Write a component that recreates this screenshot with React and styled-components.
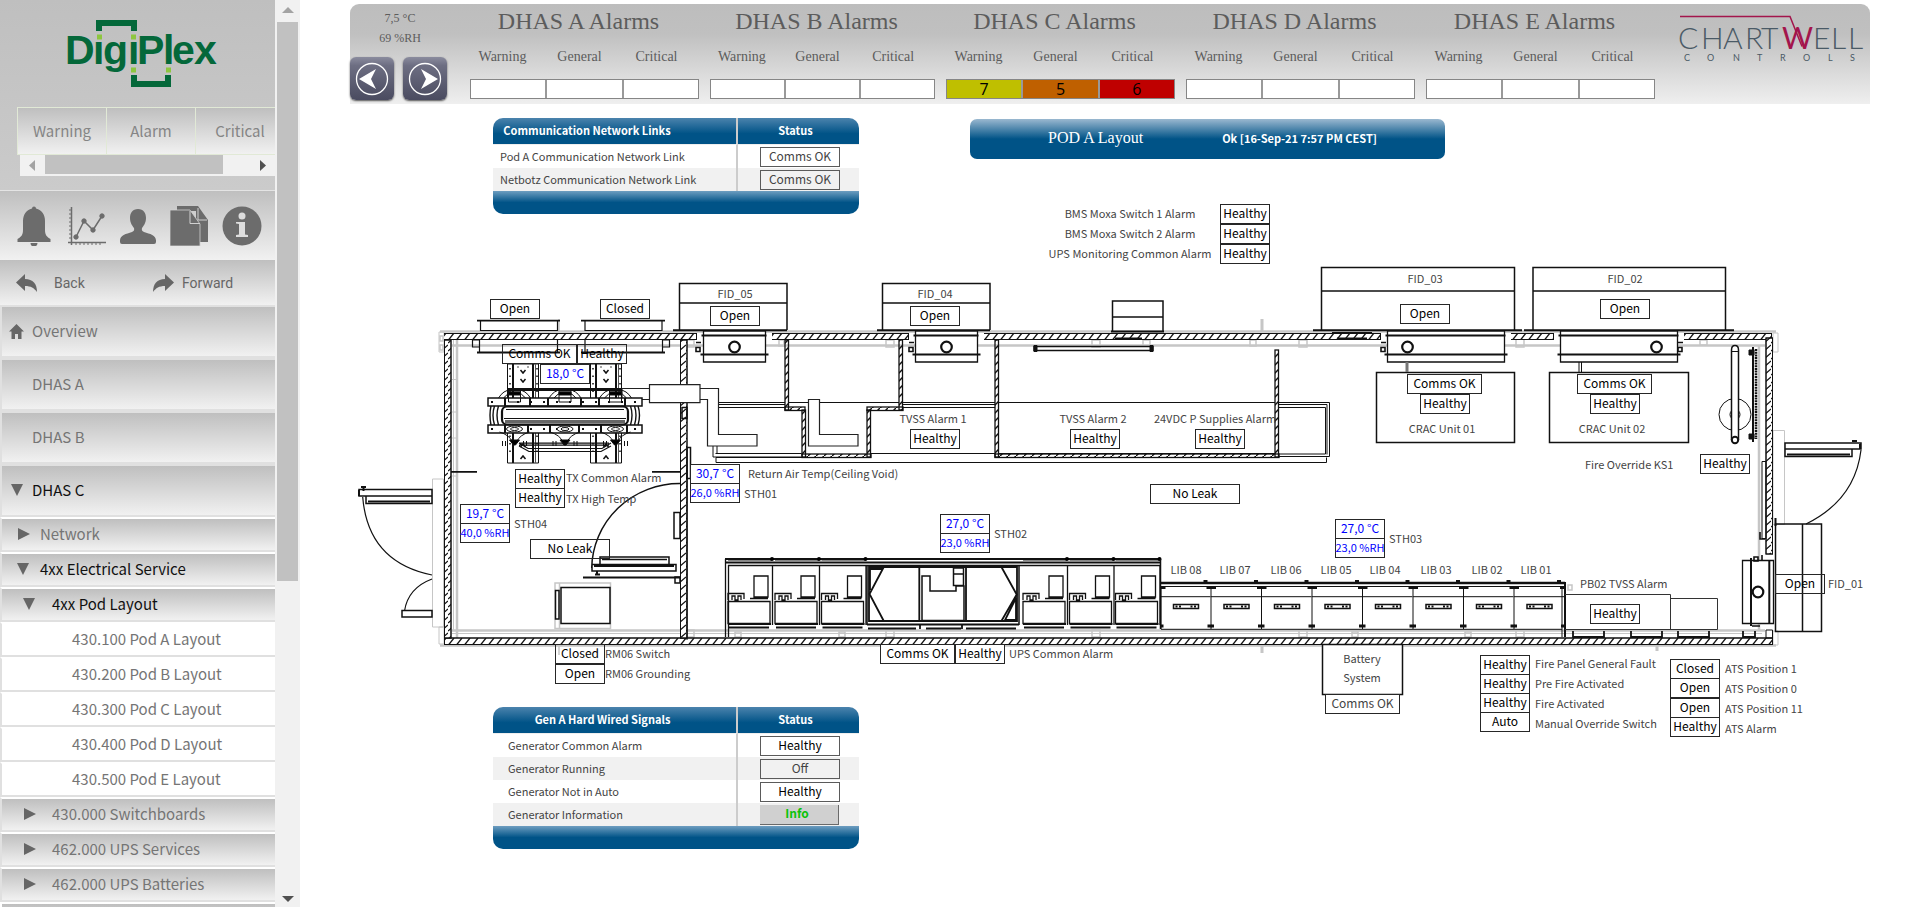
import React from 'react';
import styled, { createGlobalStyle, css } from 'styled-components';

const LABEL = '"Noto Sans CJK SC", "Noto Sans", sans-serif';
const SERIF = '"Liberation Serif", "Times New Roman", serif';
const SHADE = 'linear-gradient(#bfbfbf, #f1f1f1)';

const GlobalStyle = createGlobalStyle`
  * { box-sizing: border-box; }
  body { margin: 0; background: #fff; font-family: ${LABEL}; font-size: 11px; color: #444; }
  button { font: inherit; color: inherit; margin: 0; padding: 0; border: 0; background: none; cursor: pointer; }
  a { color: inherit; text-decoration: none; }
  svg { display: block; flex: none; }
`;

const Page = styled.div`
  display: flex;
  height: 100vh;
  overflow: hidden;
`;

/* ---------- sidebar ---------- */

const Sidebar = styled.aside`
  display: flex;
  flex: none;
  width: 300px;
  height: 100%;
  background: #f1f1f1;
`;
const SideBody = styled.div`
  width: 275px;
  overflow: hidden;
  color: #757575;
  font-size: 15px;
`;
const Brand = styled.div`
  height: 191px;
  padding: 20px 0 0 17px;
  border-bottom: 1px solid #e4e4e4;
  background: linear-gradient(#bfbfbf, #cbcbcb);
  overflow: hidden;
`;
const BrandLogo = styled.svg`
  margin: 0 0 19px 49px;
`;
const Tabs = styled.div`
  display: flex;
  width: 268px;
  height: 48px;
  border: 1px solid #e1e9d6;
`;
const Tab = styled.button`
  flex: 1;
  padding-bottom: 2px;
  background: ${SHADE};
  color: #858585;
  & + & { border-left: 1px solid #e1e9d6; }
`;
const HScroll = styled.div`
  display: flex;
  align-items: center;
  justify-content: space-between;
  height: 21px;
  margin-left: 3px;
  padding: 0 9px;
  background: #f1f1f1;
`;
const HThumb = styled.div`
  width: 178px;
  height: 19px;
  margin: 0 auto 2px 10px;
  background: #c1c1c1;
`;
const VScroll = styled.div`
  display: flex;
  flex-direction: column;
  align-items: center;
  width: 25px;
  padding: 7px 0 5px;
`;
const VThumb = styled.div`
  width: 21px;
  height: 559px;
  margin: 9px 0 auto;
  background: #c1c1c1;
`;
const Tools = styled.div`
  display: flex;
  justify-content: space-between;
  align-items: center;
  height: 69px;
  padding: 0 13px 0 17px;
  background: ${SHADE};
`;
const History = styled.div`
  display: flex;
  height: 45px;
  background: ${SHADE};
  font-family: Roboto, sans-serif;
  font-size: 14px;
`;
const HistoryButton = styled.button`
  display: flex;
  align-items: center;
  gap: ${p => p.$gap}px;
  width: 137px;
  padding-left: 16px;
  color: #666;
`;
const NavItem = styled.a`
  display: flex;
  align-items: center;
  position: relative;
  height: ${p => (p.$top ? 53 : 35)}px;
  padding: 0 0 2px ${p => p.$indent - 2}px;
  border: solid #e0e0e0;
  border-width: 2px 0 2px 2px;
  border-top-color: ${p => (p.$top ? '#e0e0e0' : '#fff')};
  background: ${p => (p.$leaf ? '#fff' : SHADE)} padding-box;
  color: ${p => (p.$open ? '#111' : '#757575')};
  white-space: nowrap;
`;
const NavGlyph = styled.svg`
  position: absolute;
  left: ${p => p.$x}px;
`;
const NavEdge = styled.div`
  height: 35px;
  border: solid #fff;
  border-width: 2px 0 0 2px;
  background: ${SHADE};
`;

const NAV = [
  { t: 'Overview', i: 32, top: 1, icon: 'home', x: 7 },
  { t: 'DHAS A', i: 32, top: 1 },
  { t: 'DHAS B', i: 32, top: 1 },
  { t: 'DHAS C', i: 32, top: 1, icon: 'down', x: 9, open: 1 },
  { t: 'Network', i: 40, icon: 'right', x: 16 },
  { t: '4xx Electrical Service', i: 40, icon: 'down', x: 15, open: 1 },
  { t: '4xx Pod Layout', i: 52, icon: 'down', x: 21, open: 1 },
  { t: '430.100 Pod A Layout', i: 72, leaf: 1 },
  { t: '430.200 Pod B Layout', i: 72, leaf: 1 },
  { t: '430.300 Pod C Layout', i: 72, leaf: 1 },
  { t: '430.400 Pod D Layout', i: 72, leaf: 1 },
  { t: '430.500 Pod E Layout', i: 72, leaf: 1 },
  { t: '430.000 Switchboards', i: 52, icon: 'right', x: 22 },
  { t: '462.000 UPS Services', i: 52, icon: 'right', x: 22 },
  { t: '462.000 UPS Batteries', i: 52, icon: 'right', x: 22 },
];
const GLYPH = {
  home: 'M7.500 1L15 8.500h-2.500V16H9V11H6v5H2.500V8.500H0z',
  down: 'M0 2h12L6 14z',
  right: 'M0 2l12 6-12 6z',
};

function DigiPlexLogo() {
  return (
    <BrandLogo width="156" height="68" viewBox="66 20 156 68" role="img" aria-label="DigiPlex">
      <text x="65 93 103 128 137 163 172 194" y="64" fontFamily="Liberation Sans, Arial, sans-serif" fontWeight="700" fontSize="41" fill="#04683a">DigiPlex</text>
      <path d="M94 32.500h9v8h-9zM129 32.500h9v8h-9z" fill="#c2c2c2" />
      <path d="M99 31V23h35v8M134 75v9h34v-9" fill="none" stroke="#04683a" strokeWidth="6" />
      <path d="M97 34.500h5v5h-5zM131 34.500h5v5h-5zM131 67.500h5v5h-5zM166 67.500h5v5h-5z" fill="#8dc63f" />
    </BrandLogo>
  );
}

function SideIcons() {
  const c = '#6c6c6c';
  return (
    <Tools>
      <button aria-label="Alarms">
        <svg width="37" height="40" fill={c}><path d="M15 2.500a2 2 0 0 1 4 0C25 4 28 9 28 15v9c0 5 2 7 5.500 9v3H.500v-3C4 31 6 29 6 24v-9C6 9 9 4 15 2.500zM13.500 37h7a3.500 3.500 0 0 1-7 0z" /></svg>
      </button>
      <button aria-label="Trends">
        <svg width="38" height="40" fill={c} stroke={c}>
          <path d="M3.500 1v38M0 36.500h38M8 31l8-16 9 9 9-14" fill="none" strokeWidth="1.500" />
          <path d="M1 4h2M1 8h2M1 12h2M1 16h2M1 20h2M1 24h2M1 28h2M1 32h2M8 37v2M12 37v2M16 37v2M20 37v2M24 37v2M28 37v2M32 37v2" />
          <circle cx="8" cy="31" r="2.200" /><circle cx="16" cy="15" r="2.200" /><circle cx="25" cy="24" r="2.200" /><circle cx="34" cy="10" r="2.200" />
        </svg>
      </button>
      <button aria-label="Users">
        <svg width="36" height="40" fill={c}><path d="M18 3c5.500 0 8 4 8 9s-2.500 8-4 10c-.5 2 0 3 2 4 6 2 12 3 12 8.500V36q0 2-2 2H2q-2 0-2-2v-1.500C0 29 6 28 12 26c2-1 2.500-2 2-4-1.500-2-4-5-4-10s2.500-9 8-9z" /></svg>
      </button>
      <button aria-label="Reports">
        <svg width="38" height="40" fill={c}>
          <path d="M7 0h21l10 14v22H26V5H7z" /><path d="M0 4h20l10 14v22H0z" stroke="#d0d0d0" strokeWidth=".8" />
          <path d="M20 5v12.500h10M28 2v12h9" fill="none" stroke="#d0d0d0" />
        </svg>
      </button>
      <button aria-label="Information">
        <svg width="40" height="40">
          <circle cx="20" cy="20" r="19.500" fill={c} />
          <circle cx="20" cy="10" r="3.500" fill="#ddd" /><path d="M14 16h9v12.500l3 .5v2H14v-2l3-.5V18l-3-.5z" fill="#ddd" />
        </svg>
      </button>
    </Tools>
  );
}

/* ---------- header ---------- */

const Main = styled.main`
  display: flex;
  flex-direction: column;
  flex: 1;
  min-width: 0;
  padding-top: 4px;
  overflow: hidden;
`;
const Header = styled.header`
  display: flex;
  flex: none;
  height: 100px;
  margin: 0 47px 14px 50px;
  border-radius: 9px 9px 0 0;
  background: linear-gradient(#bdbdbd 0, #c0c0c0 30%, #efefef);
  font-family: ${SERIF};
  font-size: 14px;
  color: #5c5c5c;
`;
const Climate = styled.div`
  display: flex;
  flex-direction: column;
  width: 120px;
  padding-top: 4px;
  line-height: 20px;
`;
const Reading = styled.div`
  width: 100px;
  text-align: center;
  font-size: 12px;
`;
const Pager = styled.div`
  display: flex;
  gap: 9px;
  padding-top: 9px;
`;
const PageButton = styled.button`
  display: grid;
  place-items: center;
  width: 44px;
  height: 43px;
  border-radius: 6px;
  background: linear-gradient(#8b8c9e, #6d6e82 20%, #4a4b60);
  box-shadow: 0 1px 2px #555;
`;
const Groups = styled.div`
  display: flex;
  flex: 1;
  gap: 11px;
`;
const Group = styled.section`
  flex: ${p => p.$grow} 1 0;
  text-align: center;
`;
const GroupTitle = styled.h2`
  margin: 0;
  padding: 3px 12px 0 0;
  font-size: 24px;
  font-weight: 400;
  line-height: 28px;
  white-space: nowrap;
`;
const Levels = styled.div`
  display: flex;
  margin: 0 4px 0 -6px;
  padding-top: 12px;
  line-height: 20px;
  span { flex: 1; }
`;
const Counts = styled.div`
  display: flex;
  height: 20px;
  margin-top: 12px;
  border: 1px solid #868686;
  font-family: "Open Sans", sans-serif;
  font-size: 16px;
  line-height: 18px;
  color: #000;
`;
const Count = styled.output`
  flex: 1;
  background: ${p => p.$fill};
  & + & { border-left: 2px solid #999; }
`;
const MakerBox = styled.div`
  display: flex;
  justify-content: flex-end;
  width: 215px;
  padding: 9px 6px 0 0;
`;

const ALARMS = [
  { n: 'A', grow: 229 },
  { n: 'B', grow: 225 },
  { n: 'C', grow: 229, v: ['7', '5', '6'] },
  { n: 'D', grow: 229 },
  { n: 'E', grow: 229 },
];
const LEVEL_COLORS = ['#bfbf00', '#bf6000', '#bf0000'];

function ChartwellLogo() {
  return (
    <svg width="186" height="52" viewBox="1678 12 186 52" role="img" aria-label="Chartwell Controls">
      <g fontFamily="Lato, sans-serif" fill="#4a5a66">
        <text x="1678 1701 1723 1745 1761 1782 1813 1831 1848" y="48" fontSize="30" fontWeight="300">
          CHART<tspan fill="#a3154c" fontWeight="400">W</tspan>ELL
        </text>
        <text x="1684 1707 1733 1757 1780 1803 1828 1850" y="60" fontSize="9">CONTROLS</text>
      </g>
      <path d="M1680 15.500h110l12 30" fill="none" stroke="#a3154c" strokeWidth="1.500" />
    </svg>
  );
}

/* ---------- tables and banner ---------- */

const TopRow = styled.div`
  display: flex;
  flex: none;
  height: 146px;
  padding-left: 193px;
`;
const Panel = styled.div`
  flex: none;
  align-self: flex-start;
  width: 366px;
  border-radius: 10px;
  overflow: hidden;
`;
const StatusTable = styled.table`
  width: 100%;
  table-layout: fixed;
  border-spacing: 0;
  line-height: 18px;
  th, td { padding: 0 0 2px; }
  th { height: 26px; background: linear-gradient(#4b83ad, #005387 60%); color: #fff; font-weight: 700; }
  th:first-child { width: 245px; border-right: 2px solid #ccc; padding-right: ${p => p.$head}px; }
  th:last-child { padding-right: 6px; }
  td { height: 23px; }
  tbody td:first-child { border-right: 2px solid #ccc; padding-left: ${p => p.$pad}px; }
  tbody tr:first-child td { height: 24px; border-top: 1px solid #eee; }
  tbody tr:nth-child(even) { background: #f1f1f1; }
  tbody td:last-child { padding: 0 0 0 22px; }
  tfoot td { background: linear-gradient(#6d9dc0, #005387 50%); }
`;
const Status = styled.div`
  width: 80px;
  height: 20px;
  border: 1px solid #5a5a5a;
  font-size: 12px;
  line-height: 16px;
  text-align: center;
  color: ${p => (p.$dark ? '#000' : '#444')};
`;
const InfoButton = styled.button`
  display: block;
  width: 79px;
  height: 20px;
  padding: 0 4px 2px 0;
  border: solid #6a6a6a;
  border-width: 0 1px 1px 0;
  background: #d0d0d0;
  color: #0ac20a;
  font-size: 12px;
  font-weight: 700;
  line-height: 16px;
`;
const BannerColumn = styled.div`
  display: flex;
  flex-direction: column;
  justify-content: space-between;
  width: 475px;
  margin: 1px 0 0 111px;
`;
const Banner = styled.div`
  display: flex;
  align-items: center;
  gap: 79px;
  height: 40px;
  padding: 0 0 2px 78px;
  border-radius: 7px;
  background: linear-gradient(#9ab8d0, #005387 50%);
  color: #fff;
  font-weight: 700;
  h1 { margin: 0; font: 400 16px/20px ${SERIF}; }
`;
const Moxa = styled.div`
  display: flex;
  width: 300px;
  height: 20px;
  padding-left: 70px;
  line-height: 18px;
  text-align: center;
  span { width: 180px; }
`;
const GenRow = styled.div`
  flex: none;
  padding-left: 193px;
`;

function DataTable({ title, pad, head, rows }) {
  return (
    <Panel>
      <StatusTable $pad={pad} $head={head}>
        <thead><tr><th>{title}</th><th>Status</th></tr></thead>
        <tbody>
          {rows.map(([name, value]) => (
            <tr key={name}>
              <td>{name}</td>
              <td>{value === 'Info' ? <InfoButton>Info</InfoButton> : <Status $dark={value === 'Healthy'}>{value}</Status>}</td>
            </tr>
          ))}
        </tbody>
        <tfoot><tr><td colSpan="2" /></tr></tfoot>
      </StatusTable>
    </Panel>
  );
}

/* ---------- floor plan ---------- */

/* Plan coordinates start at (300, 264), the corner of the plan area. */
const Plan = styled.section`
  position: relative;
  flex: none;
  height: 443px;
`;
const Drawing = styled.svg`
  position: absolute;
  inset: 0 auto auto 0;
`;
const place = css`
  position: absolute;
  left: ${p => p.$x - 300}px;
  top: ${p => p.$y - 264}px;
`;
const Tag = styled.output`
  ${place}
  display: flex;
  justify-content: center;
  width: ${p => p.$w || 50}px;
  height: 20px;
  border: 1px solid #262626;
  background: ${p => (p.$clear ? 'transparent' : '#fff')};
  color: ${p => (p.$blue ? '#00f' : p.$soft ? '#444' : '#000')};
  font-size: ${p => (p.$small ? 11 : 12)}px;
  line-height: 16px;
  white-space: nowrap;
`;
const Note = styled.div`
  ${place}
  width: ${p => (p.$mid ? '140px' : 'auto')};
  margin: -11px 0 0 ${p => (p.$mid ? '-70px' : '0')};
  line-height: 20px;
  text-align: center;
  white-space: nowrap;
`;
const MoxaTag = styled.output`
  width: 50px;
  height: 20px;
  border: 1px solid #262626;
  font-size: 12px;
  line-height: 16px;
  color: #000;
`;

const TAGS = [
  ['Open', 490, 299], ['Closed', 600, 299],
  ['Comms OK', 502, 344, { w: 75, clear: 1 }], ['Healthy', 577, 344, { clear: 1 }],
  ['18,0 °C', 540, 364, { blue: 1 }],
  ['Healthy', 515, 469], ['Healthy', 515, 488],
  ['19,7 °C', 460, 504, { blue: 1 }], ['40,0 %RH', 460, 523, { blue: 1, small: 1 }],
  ['No Leak', 530, 539, { w: 80, clear: 1 }],
  ['Closed', 555, 644, { clear: 1 }], ['Open', 555, 664, { clear: 1 }],
  ['Open', 710, 306], ['Open', 910, 306],
  ['Healthy', 910, 429], ['Healthy', 1070, 429], ['Healthy', 1195, 429],
  ['30,7 °C', 690, 464, { blue: 1 }], ['26,0 %RH', 690, 483, { blue: 1, small: 1 }],
  ['27,0 °C', 940, 514, { blue: 1 }], ['23,0 %RH', 940, 533, { blue: 1, small: 1 }],
  ['27,0 °C', 1335, 519, { blue: 1 }], ['23,0 %RH', 1335, 538, { blue: 1, small: 1 }],
  ['No Leak', 1150, 484, { w: 90 }],
  ['Open', 1400, 304], ['Open', 1600, 299],
  ['Comms OK', 1407, 374, { w: 75 }], ['Healthy', 1420, 394],
  ['Comms OK', 1577, 374, { w: 75 }], ['Healthy', 1590, 394],
  ['Healthy', 1700, 454], ['Open', 1775, 574, { clear: 1 }], ['Healthy', 1590, 604],
  ['Comms OK', 880, 644, { w: 75 }], ['Healthy', 955, 644],
  ['Comms OK', 1325, 694, { w: 75, soft: 1 }],
  ['Healthy', 1480, 655], ['Healthy', 1480, 674], ['Healthy', 1480, 693], ['Auto', 1480, 712],
  ['Closed', 1670, 659], ['Open', 1670, 678], ['Open', 1670, 698], ['Healthy', 1670, 717],
];
const NOTES = [
  ['TX Common Alarm', 566, 478], ['TX High Temp', 566, 499], ['STH04', 514, 524],
  ['RM06 Switch', 605, 654], ['RM06 Grounding', 605, 674],
  ['FID_05', 735, 294, 1], ['FID_04', 935, 294, 1],
  ['TVSS Alarm 1', 933, 419, 1], ['TVSS Alarm 2', 1093, 419, 1], ['24VDC P Supplies Alarm', 1215, 419, 1],
  ['Return Air Temp(Ceiling Void)', 748, 474], ['STH01', 744, 494],
  ['STH02', 994, 534], ['STH03', 1389, 539],
  ['LIB 08', 1186, 570, 1], ['LIB 07', 1235, 570, 1], ['LIB 06', 1286, 570, 1], ['LIB 05', 1336, 570, 1],
  ['LIB 04', 1385, 570, 1], ['LIB 03', 1436, 570, 1], ['LIB 02', 1487, 570, 1], ['LIB 01', 1536, 570, 1],
  ['FID_03', 1425, 279, 1], ['FID_02', 1625, 279, 1],
  ['CRAC Unit 01', 1442, 429, 1], ['CRAC Unit 02', 1612, 429, 1],
  ['Fire Override KS1', 1585, 465], ['FID_01', 1828, 584], ['PB02 TVSS Alarm', 1580, 584],
  ['UPS Common Alarm', 1009, 654], ['Battery', 1362, 659, 1], ['System', 1362, 678, 1],
  ['Fire Panel General Fault', 1535, 664], ['Pre Fire Activated', 1535, 684],
  ['Fire Activated', 1535, 704], ['Manual Override Switch', 1535, 724],
  ['ATS Position 1', 1725, 669], ['ATS Position 0', 1725, 689],
  ['ATS Position 11', 1725, 709], ['ATS Alarm', 1725, 729],
];

const wallsH = [[444, 253], [772, 137], [984, 397], [1511, 43], [1684, 88]];
const thinV = [[785, 340, 70], [802, 410, 47], [867, 410, 47], [899, 340, 70], [995, 340, 117], [1275, 350, 107]];
const thinH = [[785, 407, 20], [867, 407, 36], [802, 454, 69], [995, 454, 284]];

/* Rack workstation: screen, keyboard and cabinet. */
const Rack = ({ x }) => (
  <g transform={`translate(${x} 0)`}>
    <path d="M26 576h14v21h-14zM22 598.500h18M0 601.500h42v22H0zM0 600v-6.500h16V599M4 600v-4h3v4h3v-4h3v4M44.500 565v60" strokeWidth="1.300" />
    <path d="M0 624h43M1 627.500h40" strokeWidth="2" />
    <path d="M0 560.500l44 0" stroke="#888" strokeWidth="1" /><circle cx="44" cy="559" r="2" fill="#000" stroke="none" />
  </g>
);
/* Library cabinet with its handle plate. */
const Cabinet = ({ x }) => (
  <g transform={`translate(${x} 0)`}>
    <path d="M50.500 586v43M0 596.700h50" /><path d="M13 604.500h25v4H13z" strokeWidth="1.500" />
    <path d="M15 606.500h6M30 606.500h6" strokeWidth="2" strokeDasharray="2 1.500" />
    <path d="M0 587.500h5M46 587.500h5M0 626h3M47 626h4" strokeWidth="3" />
    <path d="M43 581h4" strokeWidth="2" />
  </g>
);
/* Ventilation unit in the long wall. */
const WallUnit = ({ x, w, cx, side }) => (
  <g>
    <path d={`M${x} 331h${w}v31h-${w}z`} fill="#fff" strokeWidth="1.300" />
    <path d={`M${x - 2} 335.500h${w + 3}M${x - 3} 354.500h${w + 6}`} strokeWidth="2" />
    <circle cx={cx} cy="347" r="5.300" strokeWidth="2.200" />
    <path d={`M${side - 2} 342.500h5M${side - 2} 347.500h4v4h-4z`} strokeWidth="1.600" />
  </g>
);
/* One transformer phase: coil mount on top, bushing below. */
const Phase = ({ x }) => (
  <g transform={`translate(${x} 0)`}>
    <path d="M-16 398q5-8 12-8h8q7 0 12 8M-11 398q4-5 8-5M11 398q-4-5-8-5M-6 391h12v11h-12z" />
    <path d="M-6 392h12v3h-12z" fill="#000" />
    <ellipse cx="0" cy="429" rx="8" ry="3" fill="#fff" /><ellipse cx="0" cy="429" rx="4" ry="1.500" />
    <path d="M-15 432q10 3 13 10h4q3-7 13-10" /><path d="M-5 440h10l-4 5h-2z" fill="#000" />
    <path d="M-12 441v5M-9 441v5M12 441v5M9 441v5" />
  </g>
);
/* Steel support column under the transformer. */
const Column = ({ x }) => (
  <g transform={`translate(${x} 0)`}>
    <path d="M0 364h31v99H0z" fill="#fff" /><path d="M5.500 364v99M25.500 364v99" strokeWidth="2" /><path d="M28 364v99" stroke="#555" />
    <path d="M2.500 368v90M29.500 368v90" strokeWidth="1.500" strokeDasharray="1.500 6" />
    <path d="M13 370l2.500 3 2.500-3M13 379l2.500 3 2.500-3M13 459l2.500-3 2.500 3M13 447l2.500-3 2.500 3M10 367h1M20 367h1" strokeWidth="1.500" />
  </g>
);

function FloorPlan() {
  return (
    <Drawing width="1570" height="443" viewBox="300 264 1570 443" fill="none" stroke="#111" aria-hidden="true">
      <defs>
        <pattern id="wall-h" patternUnits="userSpaceOnUse" x="0" y="333" width="8" height="7"><path d="M0.500 7L6 0" stroke="#111" strokeWidth="1.300" /></pattern>
        <pattern id="wall-b" patternUnits="userSpaceOnUse" x="0" y="638" width="8" height="7"><path d="M0.500 7L6 0" stroke="#111" strokeWidth="1.300" /></pattern>
        <pattern id="wall-v" patternUnits="userSpaceOnUse" x="0" y="0" width="7" height="8"><path d="M0 7L7 1" stroke="#111" strokeWidth="1.300" /></pattern>
        <pattern id="thin" patternUnits="userSpaceOnUse" width="8" height="8"><path d="M-1 9L9 -1" stroke="#111" strokeWidth="1.500" /></pattern>
      </defs>

      {/* light-grey lining and brackets */}
      <g stroke="#c6c6c6">
        <path d="M440 331.500h1336M440 645.500h1336" strokeWidth="2.500" />
        <path d="M452 345.500h1313M452 630.500h1313M457 340v298M1759 345v285" strokeWidth="2.500" />
        <path d="M453.500 340v290M452 379.500h4M452 412h4M452 438h4M452 476h4M452 633.500h1310" />
        <path d="M432.500 479h11v148h-11zM439 332h5v20h-5zM439 627h5v17h-5zM1773 333h5v19h-5zM1773 631h5v14h-5zM1773 430.500h11.500v94H1773z" />
        <path d="M440 336h3v5h-3zM440 345h3v5h-3zM686 340h8v7h-8zM779 340h5v6h-5zM886 340h8v7h-8zM1092 340h8v7h-8zM1143 340h7v6h-7zM1250 340h6v6h-6zM1299 340h8v7h-8zM1516 339h8v8h-8zM1700 340h7v5h-7z" strokeWidth="1.500" />
        <path d="M686 630h8v7h-8zM735 632h6v5h-6zM839 632h6v5h-6zM886 630h8v7h-8zM1092 630h8v7h-8zM1299 630h8v7h-8zM1352 632h6v5h-6zM1465 632h6v5h-6zM1516 630h8v7h-8zM1568 585h4v5h-4z" strokeWidth="1.500" />
        <path d="M555 583h55.500v45.500H555zM559.500 583v45M559 319v12M559 645v10" strokeWidth="1.500" />
        <path d="M1262 319v12M1262 645v8M1657 645v6" strokeWidth="3" />
      </g>

      {/* outer and partition walls */}
      <g strokeWidth="1">
        {wallsH.map(([x, w]) => (
          <g key={x}><rect x={x} y="333" width={w} height="7" fill="#fff" stroke="none" /><rect x={x} y="333" width={w} height="7" fill="url(#wall-h)" stroke="none" /><path d={`M${x} 339.500h${w}M${x} 333.500h${w}M${x + w - 0.5} 333v7`} /></g>
        ))}
        <rect x="444.500" y="638" width="1328" height="6.500" fill="#fff" /><rect x="444.500" y="638" width="1328" height="6.500" fill="url(#wall-b)" />
        {[[444.500, 340, 298], [680.500, 340, 298], [1766, 338, 216]].map(([x, y, h]) => (
          <g key={x}><rect x={x} y={y} width="6.500" height={h} fill="#fff" /><rect x={x} y={y} width="6.500" height={h} fill="url(#wall-v)" /></g>
        ))}
        <path d="M1766 630h6.500v8H1766z" />
      </g>

      {/* thin cubicle partitions */}
      <g strokeWidth="1.300">
        {thinV.map(([x, y, h]) => <rect key={x} x={x} y={y} width="3.500" height={h} fill="url(#thin)" />)}
        {thinH.map(([x, y, w]) => <rect key={x + '-' + y} x={x} y={y} width={w} height="3.500" fill="url(#thin)" />)}
      </g>
      <path d="M719 402.500h66M789 402.500h110M903 402.500h92M999 402.500h276M719 404.500h66M903 404.500h92M719 407.500h66M903 407.500h92M715.500 453.500h86M871 453.500h124M999 453.500h276M716 457.500v5h610.500v-5M716 457.500h86M1279 402.500h50.500v54h-50.500M1279 404.500h48v50M1279 407.500h46.500v46.500h-46.500" />
      <path d="M713 446v11h88M717 407v46" />
      <path d="M1034 346.500h119v4h-119z" strokeWidth="1.300" /><path d="M1034 345.500h3v6h-3zM1150 345.500h3v6h-3z" fill="#111" />

      {/* ducts */}
      <g fill="#fff" stroke="#222" strokeWidth="1.200">
        <path d="M622 388.500h28v11h-28z" />
        <path d="M699 388.500h19.500v46h38.500v11.500h-49.500v-46.500h-8.500z" />
        <path d="M649.500 384.700H700v18h-50.500z" />
        <path d="M808.500 399.500h11v35H858v11.500h-49.500z" />
      </g>

      {/* roof boxes */}
      <g strokeWidth="1.500">
        <path d="M679.500 330v-46.500h107.500V330M679.500 303h107.500M882.500 330v-46.500H990V330M882.500 303H990M1112.500 332v-31H1163v31M1112.500 317H1163" />
        <path d="M1321.500 330v-62.500h193V330M1321.500 291h193M1533 330v-62.500h192.500V330M1533 291h192.500" />
        <path d="M673 330.300h114M877 330.300h113M1111 331.500h53M1313 330.300h209M1524 330.300h210M1332 333h40M1337 338.500h30M1115 338.500h27" strokeWidth="2" />
        <path d="M477 320.700h83M581 320.700h84M477 352.500h83M581 352.500h84" strokeWidth="1.800" />
        <path d="M480.500 321v9.500h77V321M585 321v9.500h77V321M479.500 340v12M557.500 340v12M585 340v12M662.500 340v12M472.500 340h7v7h-7zM662.500 340h7v7h-7z" strokeWidth="1.200" />
      </g>
      <WallUnit x={703.500} w={62} cx={734.500} side={698} />
      <WallUnit x={915.500} w={62} cx={946.500} side={911} />
      <WallUnit x={1387.500} w={117} cx={1407.500} side={1383} />
      <WallUnit x={1560.500} w={117} cx={1656.500} side={1680} />

      {/* cooling units */}
      <path d="M1376.500 372.500h138v70h-138zM1549.500 372.500h139v70h-139z" strokeWidth="1.500" />
      <path d="M1407 362v10" stroke="#777" strokeWidth="3" /><path d="M1579 362v10M1581.500 362v10" />

      {/* transformer */}
      <Column x={507.500} /><Column x={590.500} />
      <path d="M507 389.500h115" strokeWidth="3" />
      <path d="M488 398h154v8H488zM488 425h154v8H488z" fill="#fff" strokeWidth="1.500" />
      <path d="M491 402h148M491 429h148" strokeWidth="1.800" strokeDasharray="2 11" />
      <path d="M505 398v8M530 398v8M548 398v8M581 398v8M599 398v8M625 398v8M505 425v8M528 425v8M550 425v8M579 425v8M601 425v8M627 425v8" strokeWidth="2" />
      <Phase x={514.500} /><Phase x={565} /><Phase x={615.500} />
      <rect x="502" y="406.500" width="126" height="18" rx="5" fill="#fff" strokeWidth="2.200" />
      <path d="M506 409.500h118M504 418.500h122" /><path d="M505 421.500h120" stroke="#666" strokeWidth="3" />
      <path d="M491 406q-2 9 0 19M494.500 406q-3 9 0 19M498.500 406q-3 9 0 19M638 406q3 9 0 19M634.500 406q3 9 0 19M630.500 406q3 9 0 19" strokeWidth="1.400" />
      <path d="M519 443.200h90M519 445.200h90M519 446l10 5.500h72l10-5.500M519 443l9 5.500h74l9-5.500" strokeWidth="1.200" />

      {/* transformer room */}
      <path d="M451 471.800h26M652 471.800h28M583 577.500h97" strokeWidth="1.800" />
      <path d="M680 483.500A88 86 0 0 0 591.700 568M592 564.500h84v6.500h-84zM600 557h69v7.500h-69zM602 559.500h65" strokeWidth="1.500" />
      <path d="M594 566h80M597 571v4M595 574.500h5" strokeWidth="2" />
      <path d="M561 587.500h49v36h-49zM555.500 590.500h3.500v28.500h-3.500zM674 512.500h6v26h-6zM675 577h5v6h-5zM682 407.500h5v11h-5zM687 447.500h3.500v31H687z" strokeWidth="1.500" />
      <path d="M687 470v170" />

      {/* doors */}
      <path d="M359 489.500h73v6.500h-73zM366 496h66v7.500h-66zM402 610.500h30v6.500h-30zM1785 443h76v6h-76zM1785 449h67v7.500h-67z" strokeWidth="1.500" />
      <path d="M362.700 497Q368 562 432 575M432 579Q408 588 404.500 611M1861 450Q1855 500 1806 524" strokeWidth="1.200" />
      <path d="M361 487h5M363.500 487v4M359 490v6M368 501.500h62M1852 441h5M1860 444v5M1787 454.500h63" strokeWidth="2" />

      {/* end wall unit */}
      <path d="M1775.500 524h46v107.500h-46zM1802.500 524v107.500" strokeWidth="1.500" />
      <path d="M1775.500 518v8" strokeWidth="2" />
      <path d="M1742.500 560.500h31v63h-31z" fill="#fff" strokeWidth="1.300" />
      <path d="M1751 558v68M1769.300 560v63" strokeWidth="2" /><circle cx="1758" cy="592" r="5.300" strokeWidth="2.200" />
      <path d="M1754 557h4v4h-4zM1762 555v5M1752 626h8M1760 532v7h5" strokeWidth="1.600" />
      <circle cx="1735" cy="414.500" r="16" /><circle cx="1735" cy="414.500" r="5" />
      <path d="M1731.500 440v-90q0-4.500 3.500-4.500t3.500 4.500v90" fill="#fff" strokeWidth="1.500" /><circle cx="1735" cy="440" r="3.200" fill="#fff" strokeWidth="2" />
      <path d="M1732 351.500h7" /><path d="M1753 347v95" strokeWidth="2" /><path d="M1756 349v90" strokeWidth="2.500" strokeDasharray="2 .7" />
      <path d="M1749 350h5v5h-5zM1749 434h5v5h-5z" fill="#111" /><path d="M1762 461.500h4v77h-4z" />

      {/* server racks */}
      <path d="M725 559h436M725 562.500h436" strokeWidth="2" /><path d="M728 565.500h433M728.500 565v72M725.500 559v78" strokeWidth="1.300" />
      {[728, 775, 821.500, 1023, 1069.500, 1115.500].map(x => <Rack key={x} x={x} />)}
      <g strokeWidth="1.800">
        <path d="M869 567h148v54H869zM919.300 567v54M966 567v54" />
        <path d="M883.500 567.500L869.500 594l14 26.500M870 590v-21h12M1001.700 567.500l15 27-15 26M1016 598v22h-11z" />
        <path d="M922 576h8v15h26v-5h8v34.500h-42zM953.500 568h10v17.500h-10zM953.500 574h10M867 565v60M1019 565v60M1160.500 559v70" strokeWidth="1.500" />
        <path d="M867 624.500h152M868 628.500h48M926 628.500h35M966 628.500h50M920 625v4M962 625v4" />
      </g>

      {/* library cabinets */}
      <path d="M1161 583h404" strokeWidth="2.500" /><path d="M1161 586.500h401M1161 629.300h401M1562 586v51M1161 586v43" /><path d="M1565 582v55" strokeWidth="2" />
      {[0, 1, 2, 3, 4, 5, 6, 7].map(i => <Cabinet key={i} x={1160.500 + i * 50.500} />)}
      <path d="M1565 594.500h105.500v35H1565M1670.500 598.500h47v31h-152" stroke="#333" />
      <path d="M1573 631v6h31v-6M1631 631v6h31v-6M1678 631v6h31v-6M1743 631v6h12v-6" strokeWidth="1.800" />
      <path d="M1322.500 644.500h80v50h-80z" fill="#fff" strokeWidth="1.500" />
    </Drawing>
  );
}

export default function App() {
  return (
    <Page>
      <GlobalStyle />
      <Sidebar>
        <SideBody>
          <Brand>
            <DigiPlexLogo />
            <Tabs><Tab>Warning</Tab><Tab>Alarm</Tab><Tab>Critical</Tab></Tabs>
            <HScroll>
              <svg width="6" height="11"><path d="M6 0v11L0 5.500z" fill="#a3a3a3" /></svg>
              <HThumb />
              <svg width="6" height="11"><path d="M0 0v11l6-5.500z" fill="#505050" /></svg>
            </HScroll>
          </Brand>
          <SideIcons />
          <History>
            <HistoryButton $gap={17}>
              <svg width="21" height="18"><path d="M9 0v5c8 0 12 5 12 13-3-4-6-6-12-6v5L0 8.500z" fill="#666" /></svg>Back
            </HistoryButton>
            <HistoryButton $gap={8}>
              <svg width="21" height="18"><path d="M12 0v5C4 5 0 10 0 18c3-4 6-6 12-6v5l9-8.500z" fill="#666" /></svg>Forward
            </HistoryButton>
          </History>
          <nav>
            {NAV.map(n => (
              <NavItem key={n.t} href="#" $top={n.top} $leaf={n.leaf} $open={n.open} $indent={n.i}>
                {n.icon && <NavGlyph $x={n.x} width="15" height="16"><path d={GLYPH[n.icon]} fill="#666" /></NavGlyph>}
                {n.t}
              </NavItem>
            ))}
            <NavEdge />
          </nav>
        </SideBody>
        <VScroll>
          <svg width="12" height="6"><path d="M0 6h12L6 0z" fill="#a3a3a3" /></svg>
          <VThumb />
          <svg width="12" height="6"><path d="M0 0h12L6 6z" fill="#505050" /></svg>
        </VScroll>
      </Sidebar>

      <Main>
        <Header>
          <Climate>
            <Reading>7,5 °C</Reading>
            <Reading>69 %RH</Reading>
            <Pager>
              <PageButton aria-label="Previous">
                <svg width="34" height="34"><circle cx="17" cy="17" r="15.500" fill="none" stroke="#fff" strokeWidth="1.300" /><path d="M4 17l17-10-5 10 5 10z" fill="#fff" /></svg>
              </PageButton>
              <PageButton aria-label="Next">
                <svg width="34" height="34"><circle cx="17" cy="17" r="15.500" fill="none" stroke="#fff" strokeWidth="1.300" /><path d="M30 17L13 7l5 10-5 10z" fill="#fff" /></svg>
              </PageButton>
            </Pager>
          </Climate>
          <Groups>
            {ALARMS.map(g => (
              <Group key={g.n} $grow={g.grow}>
                <GroupTitle>DHAS {g.n} Alarms</GroupTitle>
                <Levels><span>Warning</span><span>General</span><span>Critical</span></Levels>
                <Counts>
                  {LEVEL_COLORS.map((c, i) => <Count key={c} $fill={g.v ? c : '#fff'}>{g.v ? g.v[i] : ''}</Count>)}
                </Counts>
              </Group>
            ))}
          </Groups>
          <MakerBox><ChartwellLogo /></MakerBox>
        </Header>

        <TopRow>
          <DataTable title="Communication Network Links" pad={7} head={55} rows={[
            ['Pod A Communication Network Link', 'Comms OK'],
            ['Netbotz Communication Network Link', 'Comms OK'],
          ]} />
          <BannerColumn>
            <Banner><h1>POD A Layout</h1><span>Ok [16-Sep-21 7:57 PM CEST]</span></Banner>
            <div>
              {['BMS Moxa Switch 1 Alarm', 'BMS Moxa Switch 2 Alarm', 'UPS Monitoring Common Alarm'].map(t => (
                <Moxa key={t}><span>{t}</span><MoxaTag>Healthy</MoxaTag></Moxa>
              ))}
            </div>
          </BannerColumn>
        </TopRow>

        <Plan>
          <FloorPlan />
          {TAGS.map(([t, x, y, o = {}]) => (
            <Tag key={x + '-' + y} $x={x} $y={y} $w={o.w} $clear={o.clear} $blue={o.blue} $soft={o.soft} $small={o.small}>{t}</Tag>
          ))}
          {NOTES.map(([t, x, y, mid]) => <Note key={t} $x={x} $y={y} $mid={mid}>{t}</Note>)}
        </Plan>

        <GenRow>
          <DataTable title="Gen A Hard Wired Signals" pad={15} head={24} rows={[
            ['Generator Common Alarm', 'Healthy'],
            ['Generator Running', 'Off'],
            ['Generator Not in Auto', 'Healthy'],
            ['Generator Information', 'Info'],
          ]} />
        </GenRow>
      </Main>
    </Page>
  );
}
